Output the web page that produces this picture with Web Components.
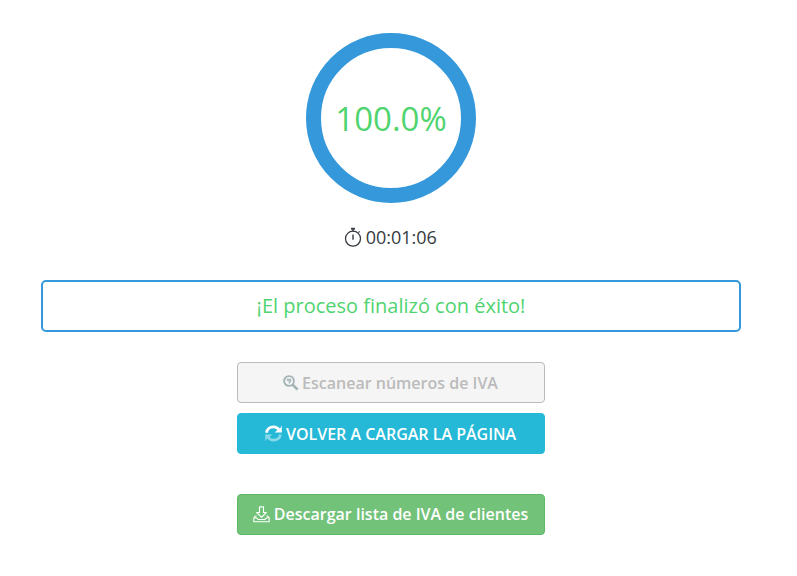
<!DOCTYPE html>
<html lang="es">
<head>
<meta charset="utf-8">
<title>Proceso finalizado</title>
<style>
html,body{margin:0;background:#fff}
body{font-family:"Open Sans","Noto Sans",sans-serif;color:#363a41;width:782px}
</style>
</head>
<body>
<process-panel></process-panel>
<script>
const define = (name, html) => customElements.define(name, class extends HTMLElement {
  constructor() {
    super();
    this.attachShadow({mode: 'open'}).innerHTML = html;
  }
});

define('progress-ring', `
<style>
:host{display:flex;align-items:center;justify-content:center;box-sizing:border-box;width:170px;height:170px;
border:15px solid #3498db;border-radius:50%;color:#4fd46f;font-size:33px;line-height:45px;white-space:nowrap}
</style><slot></slot>`);

define('elapsed-time', `
<style>
:host{display:flex;align-items:center;gap:3.4px;height:26px;padding-right:.9px;font-size:18px;line-height:26px}
svg{width:18px;height:20px;display:block}
</style>
<svg viewBox="0 0 18 20" fill="none" stroke="#363a41"><circle cx="9" cy="11.7" r="7.5" stroke-width="1.3"/><path d="M7 1.7h4" stroke-width="1.8"/><path d="M9 2v2.5M9 7.5v5.3" stroke-width="1.4"/><path d="M14.4 5.6l1.2-1.2" stroke-width="1.3"/></svg>
<slot></slot>`);

define('status-message', `
<style>
:host{display:flex;align-items:center;justify-content:center;box-sizing:border-box;width:700px;height:52px;
border:2px solid #3498db;border-radius:5px;color:#4fd46f;font-size:20px;line-height:28px}
</style><slot></slot>`);

define('action-button', `
<style>
:host{display:block;width:308px;height:41px}
button{display:flex;align-items:center;justify-content:center;gap:3.6px;box-sizing:border-box;width:100%;height:100%;padding:0 .5px 0 0;
border:1px solid #25b9d7;border-radius:4px;background:#25b9d7;color:#fff;font:600 16px/24px "Open Sans","Noto Sans",sans-serif;white-space:nowrap}
:host([kind=disabled]) button{background:#f5f5f5;border-color:#bbb;color:#bbb;gap:3px;padding-right:1px}
:host([kind=success]) button{background:#72c279;border-color:#5cb865;padding-bottom:1px}
::slotted(svg){display:block;flex:none}
</style><button><slot name="icon"></slot><span><slot></slot></span></button>`);

define('process-panel', `
<style>
:host{display:flex;flex-direction:column;align-items:center;padding-top:33px}
elapsed-time{margin-top:21px}
status-message{margin-top:30px}
.actions{display:flex;flex-direction:column;gap:10px;margin-top:30px}
.download{margin-top:30px}
</style>
<progress-ring>100.0%</progress-ring>
<elapsed-time>00:01:06</elapsed-time>
<status-message>¡El proceso finalizó con éxito!</status-message>
<div class="actions">
<action-button kind="disabled"><svg slot="icon" width="16" height="16" viewBox="0 0 16 16" fill="none" stroke="#a3b3b6"><circle cx="6" cy="6" r="4.9" stroke-width="1.9"/><path d="M9.6 9.6l5 5" stroke-width="2.7"/><path d="M4.4 5.7V4.4h3.2v1.4L6 8.5M6 4v2.8" stroke-width="1.2"/></svg>Escanear números de IVA</action-button>
<action-button><svg slot="icon" width="17" height="17" viewBox="0 0 17 17" fill="none" stroke="#fff" stroke-width="2.7"><path d="M1.5 7.8C2 4 5 1.9 8.4 1.9c2.6 0 4.6 1.2 6 3.1"/><path d="M16.8.6v7H9.8L12.3 5l2.2-.2z" fill="#fff" stroke="none"/><g opacity=".45"><path d="M15.5 9.5c-.5 3.5-3.5 5.6-6.9 5.6-2.6 0-4.6-1.2-6-3.1"/><path d="M.2 16.4v-7h7L4.7 12l-2.2.2z" fill="#fff" stroke="none"/></g></svg>VOLVER A CARGAR LA PÁGINA</action-button>
<action-button class="download" kind="success"><svg slot="icon" width="17" height="17" viewBox="0 0 17 17" fill="none" stroke="#fff" stroke-width="1.1" stroke-linejoin="round"><path d="M6.5.9h4v5.6h2.8L8.5 11.3 3.7 6.5h2.8z"/><path d="M3.5 10H2.4L.8 11.8v3.9h15.4v-3.9L14.6 10h-1.1M.8 11.8h2.6l1.9 1.7h6.4l1.9-1.7h2.6"/></svg>Descargar lista de IVA de clientes</action-button>
</div>`);
</script>
</body>
</html>
